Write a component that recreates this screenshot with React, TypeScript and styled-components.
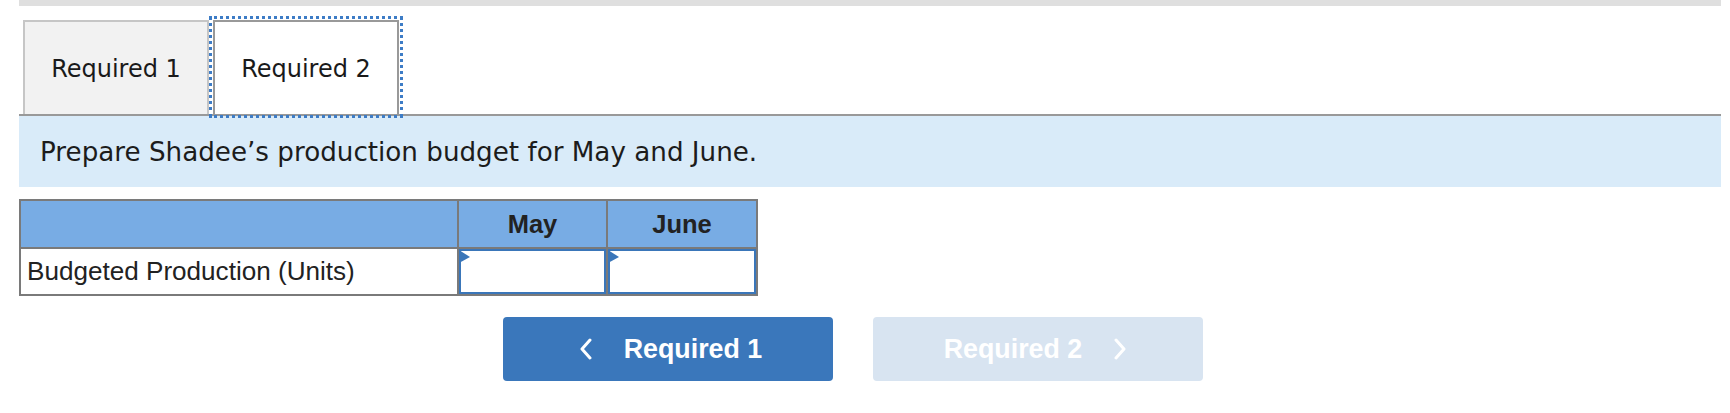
import React from "react";
import styled, { createGlobalStyle } from "styled-components";

const GlobalStyle = createGlobalStyle`
  html, body {
    margin: 0;
    padding: 0;
    background: #ffffff;
  }
  body {
    font-family: "DejaVu Sans", Verdana, sans-serif;
  }
`;

const Page = styled.div`
  width: 1702px;
  padding-left: 19px;
`;

const TopBar = styled.div`
  height: 6px;
  background: #dfdfdf;
  margin-bottom: 14px;
`;

const TabList = styled.div`
  display: flex;
  align-items: flex-end;
  gap: 4px;
  padding-left: 4px;
  border-bottom: 2px solid #999999;
  height: 94px;
`;

const Tab = styled.button<{ $active?: boolean }>`
  box-sizing: border-box;
  width: 186px;
  height: 94px;
  margin: 0;
  padding: 2px 0 0 0;
  display: flex;
  align-items: center;
  justify-content: center;
  font-family: "DejaVu Sans", Verdana, sans-serif;
  font-size: 24px;
  color: #1a1a1a;
  background: ${(p) => (p.$active ? "#ffffff" : "#f2f2f2")};
  border: 2px solid ${(p) => (p.$active ? "#999999" : "#c6c6c6")};
  border-bottom: none;
  outline: ${(p) => (p.$active ? "3px dotted #3d7cc6" : "none")};
  outline-offset: 1px;
  cursor: pointer;
`;

const Instructions = styled.div`
  height: 71px;
  display: flex;
  align-items: center;
  padding-left: 21px;
  background: #d9ebf9;
  font-size: 26.2px;
  color: #1c1c1c;
`;

const BudgetTable = styled.table`
  margin-top: 12px;
  border-collapse: separate;
  border-spacing: 0;
  border-top: 2px solid #7a7a7a;
  border-left: 2px solid #7a7a7a;
  font-family: "Liberation Sans", Arial, sans-serif;
  table-layout: fixed;
`;

const HeadCell = styled.th<{ $w: number }>`
  box-sizing: border-box;
  width: ${(p) => p.$w}px;
  height: 48px;
  padding: 0;
  background: #78ace4;
  border-right: 2px solid #7a7a7a;
  border-bottom: 2px solid #7a7a7a;
  font-size: 25.5px;
  font-weight: bold;
  color: #222222;
  text-align: center;
  vertical-align: middle;
`;

const LabelCell = styled.td`
  box-sizing: border-box;
  height: 47px;
  padding: 0 0 0 6px;
  border-right: 2px solid #7a7a7a;
  border-bottom: 2px solid #7a7a7a;
  font-size: 26.1px;
  color: #222222;
  vertical-align: middle;
  white-space: nowrap;
`;

const InputCell = styled.td`
  position: relative;
  box-sizing: border-box;
  height: 47px;
  padding: 0;
  border-right: 2px solid #7a7a7a;
  border-bottom: 2px solid #7a7a7a;
`;

const NumberInput = styled.input`
  display: block;
  box-sizing: border-box;
  width: 100%;
  height: 45px;
  margin: 0;
  border: 2px solid #3a76b9;
  background: #ffffff;
  font-family: "Liberation Sans", Arial, sans-serif;
  font-size: 24px;
  text-align: right;
  outline: none;
`;

const Marker = styled.svg`
  position: absolute;
  left: 0;
  top: 1px;
  width: 11px;
  height: 13px;
  pointer-events: none;
`;

const NavRow = styled.div`
  display: flex;
  gap: 40px;
  margin-top: 21px;
  padding-left: 484px;
`;

const NavButton = styled.button<{ $disabled?: boolean; $chevron: "left" | "right" }>`
  box-sizing: border-box;
  width: 330px;
  height: 64px;
  margin: 0;
  padding: ${(p) => (p.$chevron === "left" ? "0 0 0 5px" : "0 5px 0 0")};
  border: none;
  border-radius: 4px;
  display: flex;
  align-items: center;
  justify-content: center;
  gap: 32px;
  background: ${(p) => (p.$disabled ? "#d8e4f1" : "#3a77bb")};
  color: #ffffff;
  font-family: "Liberation Sans", Arial, sans-serif;
  font-size: 26.8px;
  font-weight: bold;
  cursor: ${(p) => (p.$disabled ? "default" : "pointer")};
`;

const Chevron = ({ dir }: { dir: "left" | "right" }) => (
  <svg width="13" height="22" viewBox="0 0 13 22" aria-hidden="true">
    <polyline
      points={dir === "left" ? "11,2 3,11 11,20" : "2,2 10,11 2,20"}
      fill="none"
      stroke="#ffffff"
      strokeWidth="3"
      strokeLinecap="round"
      strokeLinejoin="round"
    />
  </svg>
);

const months = ["May", "June"];
const widths = [149, 150];

export default function App() {
  return (
    <>
      <GlobalStyle />
      <Page>
        <TopBar />
        <TabList>
          <Tab>Required 1</Tab>
          <Tab $active>Required 2</Tab>
        </TabList>
        <Instructions>Prepare Shadee’s production budget for May and June.</Instructions>
        <BudgetTable>
          <thead>
            <tr>
              <HeadCell $w={438} />
              {months.map((m, i) => (
                <HeadCell key={m} $w={widths[i]}>
                  {m}
                </HeadCell>
              ))}
            </tr>
          </thead>
          <tbody>
            <tr>
              <LabelCell>Budgeted Production (Units)</LabelCell>
              {months.map((m) => (
                <InputCell key={m}>
                  <NumberInput type="text" aria-label={m} />
                  <Marker viewBox="0 0 11 13">
                    <polygon points="0,0 11,7 0,13" fill="#3a76b9" />
                  </Marker>
                </InputCell>
              ))}
            </tr>
          </tbody>
        </BudgetTable>
        <NavRow>
          <NavButton $chevron="left">
            <Chevron dir="left" />
            <span>Required 1</span>
          </NavButton>
          <NavButton $chevron="right" $disabled>
            <span>Required 2</span>
            <Chevron dir="right" />
          </NavButton>
        </NavRow>
      </Page>
    </>
  );
}
